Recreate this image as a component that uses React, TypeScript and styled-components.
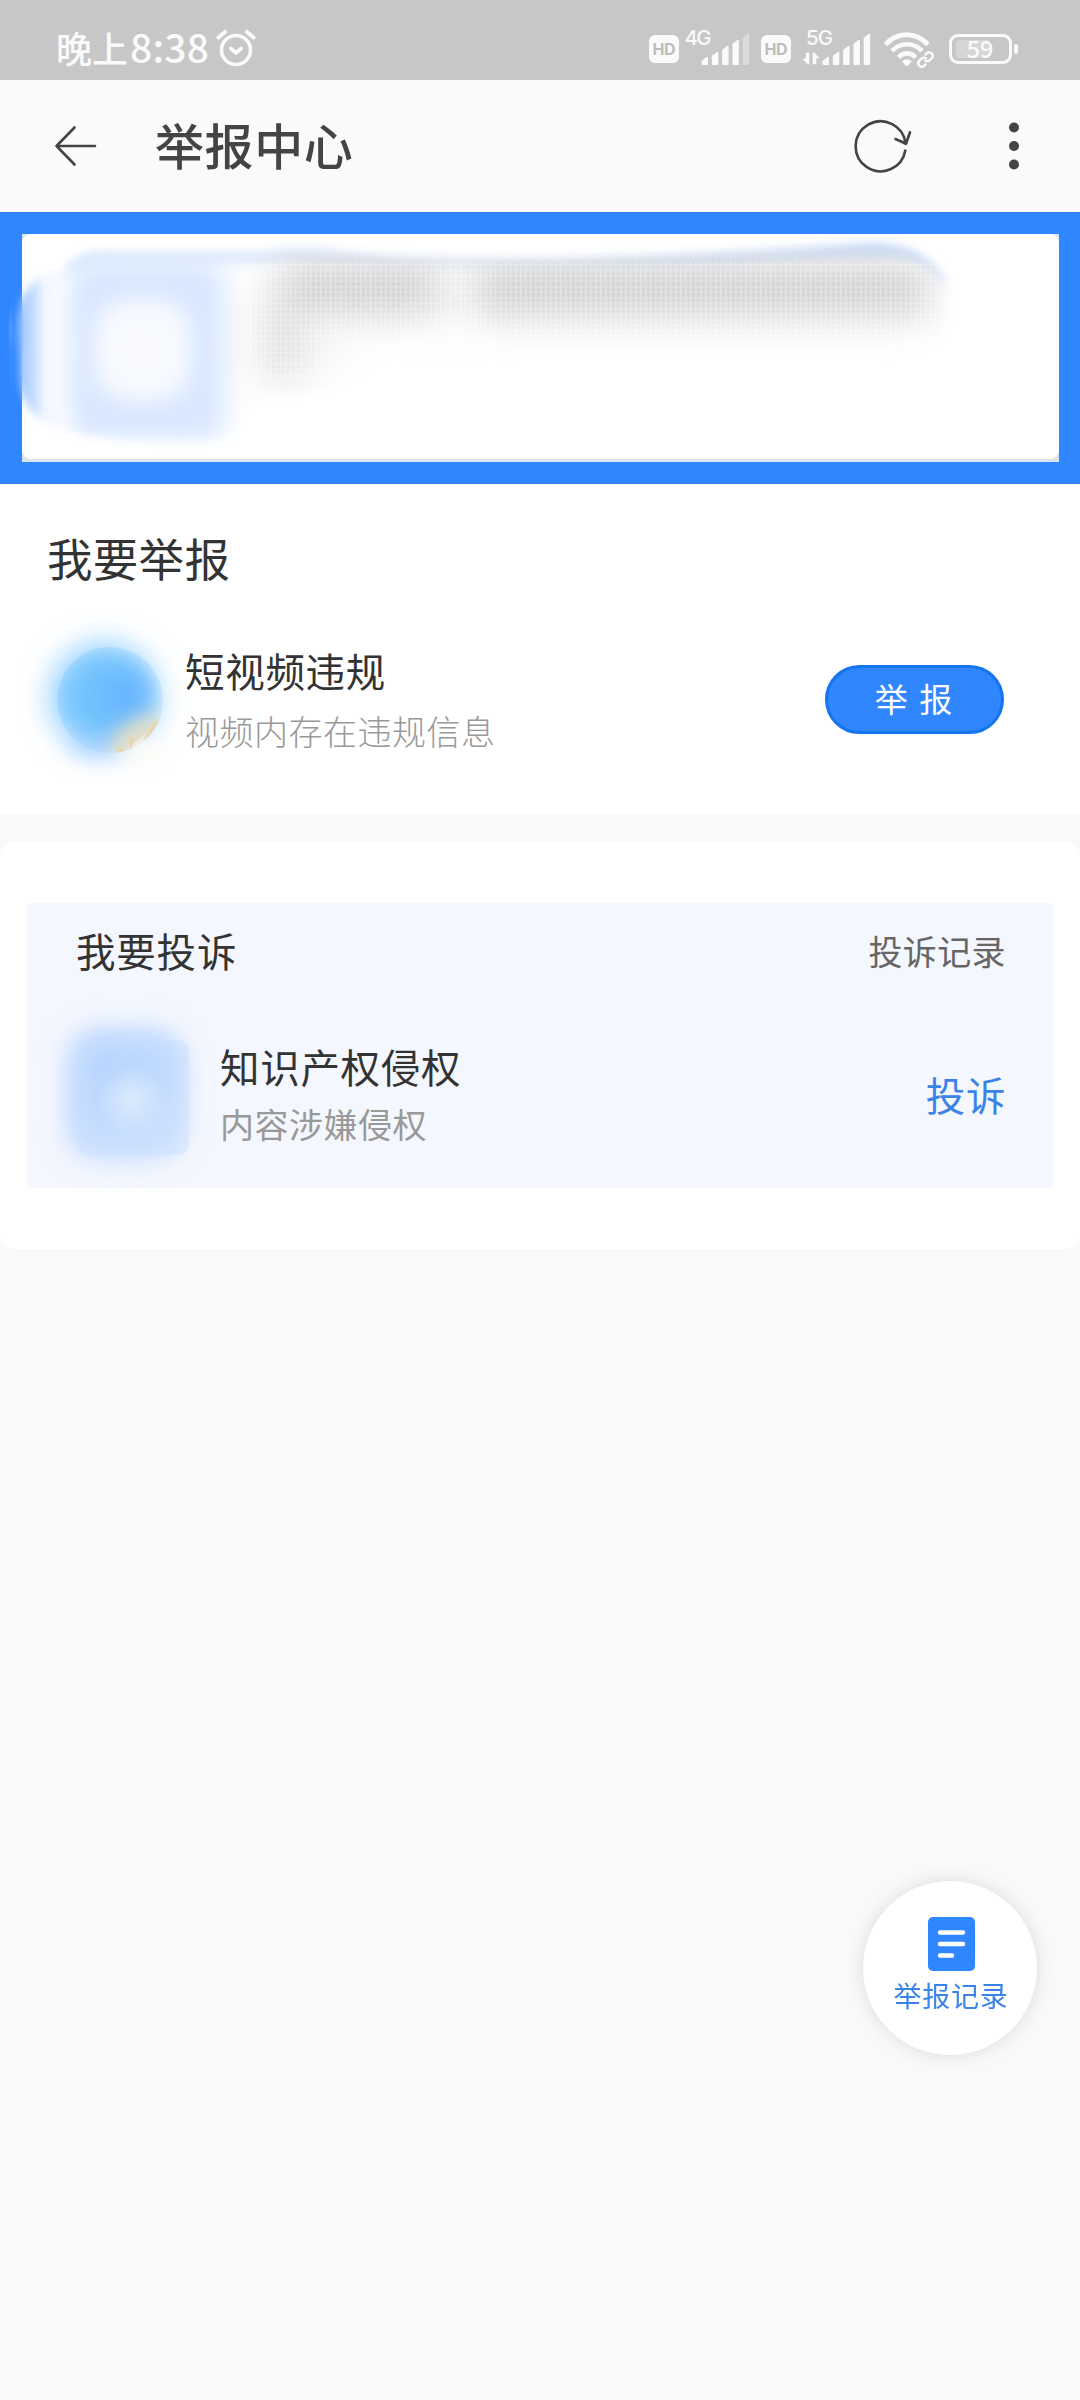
import React from "react";
import styled, { createGlobalStyle } from "styled-components";

const GlobalStyle = createGlobalStyle`
  * { box-sizing: border-box; }
  body {
    margin: 0;
    background: #f8f9fb;
    font-family: "Noto Sans CJK SC", "Noto Sans", sans-serif;
  }
  svg { display: block; flex: none; }
`;

const Page = styled.div`
  width: 1080px;
  min-height: 2400px;
  background: #f8f9fb;
  overflow: hidden;
`;

const StatusBar = styled.div`
  height: 80px;
  padding: 0 60px 0 56px;
  display: flex;
  align-items: center;
  justify-content: space-between;
  background: #c7c7c7;
  color: #fafafa;
`;

const Clock = styled.div`
  display: flex;
  align-items: center;
  gap: 7px;
  height: 36px;
  margin-top: 16px;
  font-size: 36px;
  font-weight: 500;
  line-height: 36px;
  white-space: nowrap;
`;

const ClockText = styled.span`
  margin-top: -3px;
`;

const Digits = styled.span`
  font-size: 39px;
  margin-left: 2px;
  letter-spacing: 0.2px;
`;

const StatusIcons = styled.div`
  display: flex;
  align-items: flex-start;
  height: 80px;
`;

const Header = styled.header`
  height: 132px;
  padding: 0 60px 0 54px;
  display: flex;
  align-items: center;
  background: #fafafa;
`;

const Title = styled.h1`
  flex: 1;
  margin: -5px 0 0 58px;
  font-size: 49px;
  line-height: 60px;
  font-weight: 500;
  letter-spacing: 0.6px;
  color: #444;
`;

const Banner = styled.section`
  position: relative;
  height: 272px;
  padding: 22px 21px 21px 22px;
  background: #2f86ff;
`;

const BannerFrame = styled.div`
  height: 228px;
  padding-bottom: 3px;
  background: #dbe4ef;
`;

const BannerCard = styled.div`
  height: 225px;
  border-radius: 9px;
  background: #fff;
`;

const BannerSmudge = styled.svg`
  position: absolute;
  left: 0;
  top: 0;
`;

const ReportSection = styled.section`
  height: 330px;
  padding: 40px 76px 0 47px;
  background: #fff;
`;

const ReportHeading = styled.h2`
  margin: 0;
  font-size: 45.5px;
  line-height: 66px;
  font-weight: 400;
  letter-spacing: 0.3px;
  color: #333;
`;

const ReportRow = styled.div`
  display: flex;
  align-items: center;
  height: 140px;
  margin-top: 39px;
`;

const RowText = styled.div<{ $left: number; $shift: number }>`
  flex: 1;
  display: flex;
  flex-direction: column;
  margin-left: ${(p) => p.$left}px;
  padding-top: ${(p) => Math.max(p.$shift, 0)}px;
  padding-bottom: ${(p) => Math.max(-p.$shift, 0)}px;
`;

const RowTitle = styled.div`
  font-size: 39.5px;
  line-height: 58px;
  letter-spacing: 0.7px;
  color: #333;
`;

const RowNote = styled.div<{ $light?: boolean }>`
  font-size: 34px;
  line-height: ${(p) => (p.$light ? 63 : 57)}px;
  letter-spacing: 0.5px;
  font-weight: ${(p) => (p.$light ? 300 : 400)};
  color: #999;
`;

const ReportButton = styled.button`
  width: 179px;
  height: 69px;
  padding: 0 2px 3px 0;
  border: 3px solid #1574f0;
  border-radius: 35px;
  background: #2f86ff;
  color: #fff;
  font: 400 33px/60px "Noto Sans CJK SC", sans-serif;
  word-spacing: 4px;
`;

const ComplaintCard = styled.section`
  height: 407px;
  margin-top: 28px;
  padding: 60.5px 27px 61px 27px;
  border-radius: 14px;
  background: #fff;
`;

const ComplaintPanel = styled.div`
  height: 285px;
  padding: 15px 47px 0 49px;
  border-radius: 2px;
  background: #f4f7fe;
`;

const ComplaintHead = styled.div`
  display: flex;
  align-items: center;
  justify-content: space-between;
  height: 64px;
`;

const ComplaintHeading = styled.h2`
  margin: 0;
  font-size: 39.5px;
  font-weight: 400;
  letter-spacing: 0.8px;
  color: #333;
`;

const RecordLink = styled.a`
  padding-top: 1px;
  font-size: 34px;
  letter-spacing: 0.4px;
  color: #666;
`;

const ComplaintRow = styled.div`
  display: flex;
  align-items: center;
  height: 115px;
  margin-top: 58px;
`;

const ComplaintLink = styled.a`
  margin-top: -8px;
  font-size: 39.5px;
  letter-spacing: 0.6px;
  color: #3a84e8;
`;

const RecordFab = styled.button`
  position: fixed;
  left: 863px;
  top: 1881px;
  width: 174px;
  height: 174px;
  padding: 36px 0 0 2px;
  display: flex;
  flex-direction: column;
  align-items: center;
  border: 0;
  border-radius: 50%;
  background: #fff;
  box-shadow: 0 0 18px rgba(0, 0, 0, 0.12);
  color: #3a84e8;
  font: 400 28px/42px "Noto Sans CJK SC", sans-serif;
  letter-spacing: 0.7px;
`;

const FabLabel = styled.span`
  margin-top: 3px;
`;

const AlarmIcon = () => (
  <svg width="40" height="38" viewBox="0 0 40 38" fill="none" stroke="#fafafa" strokeLinecap="round" strokeLinejoin="round">
    <circle cx="20" cy="21" r="14.5" strokeWidth="3.6" />
    <path d="M2.5 8.5 9 3M37.500 8.500 31 3" strokeWidth="4.200" />
    <path d="m15 19.500 5 4.500 5-4.500" strokeWidth="3.800" />
  </svg>
);

const barHeights = [8, 13, 19, 25, 31];

const SignalBars = ({ x, dim }: { x: number; dim?: boolean }) => (
  <>
    {barHeights.map((h, i) => {
      const left = x + i * 10.3;
      const top = 65 - h;
      return (
        <path
          key={h}
          d={`M${left} ${top + 4}L${left + 5} ${top}H${left + 6.5}V64Q${left + 6.5} 65 ${left + 5.500} 65H${left + 1}Q${left} 65 ${left} 64Z`}
          fill="#fafafa"
          opacity={dim && i === 4 ? 0.4 : 1}
        />
      );
    })}
  </>
);

const HdBadge = ({ x }: { x: number }) => (
  <>
    <rect x={x} y="35" width="30" height="28" rx="6" fill="#fafafa" />
    <text x={x + 15} y="55" textAnchor="middle" fontSize="16" fontWeight="700" fontFamily="Inter, sans-serif" fill="#bdbdbd" textLength="23">HD</text>
  </>
);

const SignalIcons = () => (
  <svg width="371" height="80" viewBox="649 0 371 80">
    <HdBadge x={649} />
    <text x="684.500" y="45" fontSize="20.500" fontWeight="500" fontFamily="Inter, sans-serif" fill="#fafafa" textLength="27">4G</text>
    <SignalBars x={701.5} dim />
    <HdBadge x={761} />
    <text x="806" y="45" fontSize="20.500" fontWeight="500" fontFamily="Inter, sans-serif" fill="#fafafa" textLength="27">5G</text>
    <path d="M809 53v11h-1.500l-4.500-5h3v-6zM813 64V53h1.500l4.500 5h-3v6z" fill="#fafafa" stroke="#fafafa" strokeWidth=".6" />
    <SignalBars x={822.5} />
    <g fill="none" stroke="#fafafa" strokeLinecap="butt">
      <path d="M885.500 44.500C897 31.500 916 31.500 928 44.500" strokeWidth="5" />
      <path d="M892 51C900 42 914 42 922 51" strokeWidth="4.600" />
      <path d="M898.500 57.500C903 52 911 52 915.500 57.500" strokeWidth="4.600" />
    </g>
    <path d="M902 61.500Q907 57 911.500 61.500L908 65.500Q907 66.500 905.500 65.500Z" fill="#fafafa" />
    <g fill="none" stroke="#fafafa" strokeWidth="2.400" transform="rotate(-45 925.500 59.500)">
      <path d="M923 63H919.500A3.600 3.600 0 0 1 919.500 56H923.500A3.600 3.600 0 0 1 926.500 60" />
      <path d="M928 56H931.500A3.600 3.600 0 0 1 931.500 63H927.500A3.600 3.600 0 0 1 924.500 59" />
    </g>
    <rect x="950.500" y="35.500" width="60" height="27" rx="7.500" fill="none" stroke="#fafafa" strokeWidth="3" />
    <rect x="956" y="40" width="33" height="18" rx="3" fill="#d6d6d6" />
    <text x="980" y="57.800" textAnchor="middle" fontSize="24" fontWeight="500" fontFamily="'Noto Sans CJK SC', sans-serif" fill="#fafafa" textLength="27">59</text>
    <rect x="1014" y="44" width="4" height="10" rx="2" fill="#fafafa" />
  </svg>
);

const BackIcon = () => (
  <svg width="43" height="42" viewBox="0 0 43 42" fill="none" stroke="#444" strokeWidth="2.600" strokeLinecap="round" strokeLinejoin="round">
    <path d="M41 21H2.500M20.500 2.500 2.500 21l18 18.500" />
  </svg>
);

const RefreshIcon = () => (
  <svg width="60" height="56" viewBox="852 118 60 56" fill="none" stroke="#444" strokeWidth="2.600" strokeLinecap="round" strokeLinejoin="round">
    <path d="M905.300 150.500A25 25 0 1 1 905.500 143.500" />
    <path d="M895.500 139 906 143.800 910 132.300" />
  </svg>
);

const MoreSvg = styled.svg`
  margin-left: 96px;
`;

const MoreIcon = () => (
  <MoreSvg width="12" height="50" viewBox="0 0 12 50" fill="#444">
    <circle cx="6" cy="6.500" r="5" />
    <circle cx="6" cy="25" r="5" />
    <circle cx="6" cy="43.500" r="5" />
  </MoreSvg>
);

const Smudge = () => (
  <BannerSmudge width="1080" height="272" viewBox="0 212 1080 272" colorInterpolationFilters="sRGB">
    <defs>
      <filter id="soft3" x="-10%" y="-20%" width="120%" height="140%"><feGaussianBlur stdDeviation="4" /></filter>
      <filter id="soft6" filterUnits="userSpaceOnUse" x="0" y="212" width="1080" height="272"><feGaussianBlur stdDeviation="6" /></filter>
      <filter id="soft12" x="-60%" y="-60%" width="220%" height="220%"><feGaussianBlur stdDeviation="13" /></filter>
      <filter id="soft18" x="-60%" y="-100%" width="220%" height="300%"><feGaussianBlur stdDeviation="19 17" /></filter>
      <linearGradient id="leftEdge" gradientUnits="userSpaceOnUse" x1="12" x2="70" y1="0" y2="0">
        <stop offset="0" stopColor="#5a9fff" />
        <stop offset=".17" stopColor="#8fbeff" />
        <stop offset=".22" stopColor="#a9cdff" />
        <stop offset=".4" stopColor="#cce1ff" />
        <stop offset=".56" stopColor="#eff5ff" />
        <stop offset="1" stopColor="#f3f8ff" stopOpacity="0" />
      </linearGradient>
      <linearGradient id="topGlow" gradientUnits="userSpaceOnUse" x1="60" x2="950" y1="0" y2="0">
        <stop offset="0" stopColor="#dce9fe" />
        <stop offset=".5" stopColor="#e6edf9" />
        <stop offset=".8" stopColor="#d5e2f8" />
        <stop offset="1" stopColor="#c3dafb" />
      </linearGradient>
      <linearGradient id="greyFade" x1="0" x2="0" y1="0" y2="1">
        <stop offset="0" stopColor="#cdcdcd" />
        <stop offset=".5" stopColor="#cecece" />
        <stop offset="1" stopColor="#ececec" />
      </linearGradient>
      <pattern id="weave" width="5" height="5.500" patternUnits="userSpaceOnUse">
        <path d="M0 .8H5M.8 0V5.500" stroke="#fff" strokeWidth="1.300" opacity=".36" />
      </pattern>
      <mask id="brush" maskUnits="userSpaceOnUse" x="0" y="212" width="1080" height="272">
        <path
          d="M15 330C17 292 34 277 62 270C75 254 88 250 110 251L260 251C300 242 340 251 400 255C560 261 720 252 850 244C905 236 950 260 951 305C949 340 930 360 890 362L380 365C340 405 270 395 250 405C248 435 235 443 205 443C140 443 85 440 65 430C30 420 15 395 18 360Z"
          fill="#fff" filter="url(#soft3)"
        />
      </mask>
    </defs>
    <g mask="url(#brush)">
      <rect y="212" width="1080" height="272" fill="#fff" />
      <path d="M60 262C88 250 100 250 260 250C320 246 380 255 560 257C720 252 880 242 905 244Q940 250 955 275" fill="none" stroke="url(#topGlow)" strokeWidth="28" filter="url(#soft6)" />
      <rect x="68" y="260" width="158" height="182" rx="24" fill="#d8e8ff" filter="url(#soft12)" />
      <rect x="98" y="302" width="90" height="96" rx="26" fill="#fafbff" filter="url(#soft12)" />
      <ellipse cx="142" cy="350" rx="38" ry="40" fill="#f7f9fe" filter="url(#soft12)" />
      <rect x="12" y="260" width="58" height="180" fill="url(#leftEdge)" />
      <g filter="url(#soft18)">
        <rect x="276" y="264" width="166" height="60" fill="url(#greyFade)" />
        <rect x="472" y="264" width="458" height="62" fill="url(#greyFade)" />
        <rect x="260" y="296" width="46" height="84" fill="#dedede" />
        <rect x="300" y="340" width="48" height="28" fill="#f4f4f4" />
      </g>
      <rect x="242" y="262" width="714" height="118" fill="url(#weave)" />
      <path d="M260 246C320 242 380 249 560 251C720 246 880 236 905 238Q945 248 957 280" fill="none" stroke="url(#topGlow)" strokeWidth="12" filter="url(#soft6)" />
    </g>
  </BannerSmudge>
);

const VideoSvg = styled.svg`
  margin-left: -15px;
`;

const VideoIcon = () => (
  <VideoSvg width="122" height="140" viewBox="-16 -2 122 140" overflow="visible" colorInterpolationFilters="sRGB">
    <defs>
      <filter id="haze" x="-60%" y="-60%" width="220%" height="220%"><feGaussianBlur stdDeviation="14" /></filter>
      <filter id="tint" x="-80%" y="-80%" width="260%" height="260%"><feGaussianBlur stdDeviation="10" /></filter>
      <clipPath id="disc"><circle cx="62" cy="69" r="53" /></clipPath>
    </defs>
    <circle cx="56" cy="66" r="55" fill="#96d2ff" filter="url(#haze)" />
    <ellipse cx="46" cy="110" rx="26" ry="16" fill="#b4d4ff" filter="url(#tint)" opacity=".75" />
    <ellipse cx="92" cy="120" rx="22" ry="11" fill="#fffcf5" filter="url(#tint)" />
    <g clipPath="url(#disc)">
      <circle cx="57" cy="66" r="42" fill="#70c3fd" filter="url(#haze)" />
      <ellipse cx="78" cy="66" rx="20" ry="26" fill="#69b2ff" filter="url(#haze)" />
      <ellipse cx="90" cy="104" rx="30" ry="14" transform="rotate(-30 90 104)" fill="#e6dcc0" filter="url(#tint)" />
      <path d="m98 106 7-14 13-6-7 18-14 13z" fill="#f1cd86" opacity=".5" />
      <path d="m68 115 8 3 5 6-12 3zM82 106h3v12h-3z" fill="#ecd08e" opacity=".5" />
      <path d="M85 113 97 103 92 123 77 126Z" fill="#fffdf6" opacity=".45" />
    </g>
  </VideoSvg>
);

const PropertyIcon = () => (
  <svg width="114" height="115" viewBox="0 0 114 115" overflow="visible" colorInterpolationFilters="sRGB">
    <defs>
      <filter id="halo" x="-50%" y="-50%" width="200%" height="200%"><feGaussianBlur stdDeviation="12" /></filter>
      <linearGradient id="tile" x1=".2" x2=".8" y1="0" y2="1">
        <stop offset="0" stopColor="#b4d3ff" />
        <stop offset="1" stopColor="#cbe0fd" />
      </linearGradient>
      <radialGradient id="tileCore">
        <stop offset="0" stopColor="#dceafc" />
        <stop offset="1" stopColor="#dceafc" stopOpacity="0" />
      </radialGradient>
    </defs>
    <rect x="-10" y="-13" width="117" height="132" rx="34" fill="#c4dcff" filter="url(#halo)" />
    <rect x="0" y="0" width="113" height="115" rx="12" fill="#cfe1fd" opacity=".55" />
    <rect x="8" y="6" width="92" height="90" rx="16" fill="url(#tile)" filter="url(#halo)" />
    <circle cx="56" cy="60" r="34" fill="url(#tileCore)" />
  </svg>
);

const DocumentIcon = () => (
  <svg width="47" height="54" viewBox="0 0 47 54">
    <rect width="47" height="54" rx="5" fill="#2f86ff" />
    <path d="M12 15.500H35M12 27H35M12 38.500H24" stroke="#fff" strokeWidth="4.400" strokeLinecap="round" />
  </svg>
);

export default function App() {
  return (
    <Page>
      <GlobalStyle />
      <StatusBar>
        <Clock>
          <ClockText>晚上<Digits>8:38</Digits></ClockText>
          <AlarmIcon />
        </Clock>
        <StatusIcons><SignalIcons /></StatusIcons>
      </StatusBar>
      <Header>
        <BackIcon />
        <Title>举报中心</Title>
        <RefreshIcon />
        <MoreIcon />
      </Header>
      <Banner>
        <BannerFrame><BannerCard /></BannerFrame>
        <Smudge />
      </Banner>
      <ReportSection>
        <ReportHeading>我要举报</ReportHeading>
        <ReportRow>
          <VideoIcon />
          <RowText $left={31} $shift={4}>
            <RowTitle>短视频违规</RowTitle>
            <RowNote $light>视频内存在违规信息</RowNote>
          </RowText>
          <ReportButton>举 报</ReportButton>
        </ReportRow>
      </ReportSection>
      <ComplaintCard>
        <ComplaintPanel>
          <ComplaintHead>
            <ComplaintHeading>我要投诉</ComplaintHeading>
            <RecordLink>投诉记录</RecordLink>
          </ComplaintHead>
          <ComplaintRow>
            <PropertyIcon />
            <RowText $left={30} $shift={-5}>
              <RowTitle>知识产权侵权</RowTitle>
              <RowNote>内容涉嫌侵权</RowNote>
            </RowText>
            <ComplaintLink>投诉</ComplaintLink>
          </ComplaintRow>
        </ComplaintPanel>
      </ComplaintCard>
      <RecordFab>
        <DocumentIcon />
        <FabLabel>举报记录</FabLabel>
      </RecordFab>
    </Page>
  );
}
